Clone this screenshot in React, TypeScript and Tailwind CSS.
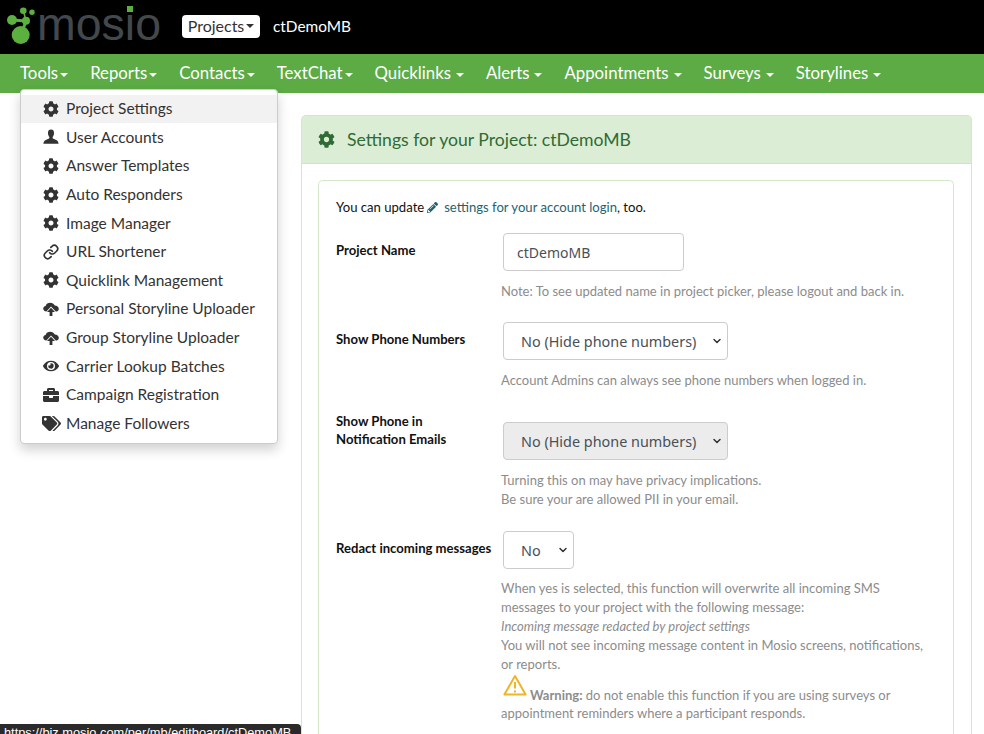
import { ChevronDown, Link } from "lucide-react";
import { FaBriefcase, FaCog, FaEye, FaPencilAlt, FaTags } from "react-icons/fa";

function Caret() {
  return <span className="inline-block ml-[2px] w-0 h-0 border-x-[4px] border-x-transparent border-t-[4px] border-t-current align-middle" />;
}

function CloudUp({ className }: { className?: string }) {
  return (
    <svg viewBox="0 0 16 16" className={className} fill="currentColor">
      <path d="M3.4 10.6 C1.4 10.4 0.2 9.2 0.2 7.6 C0.2 6.2 1.2 5.1 2.6 4.9 C3.2 3 5 1.8 7.2 1.8 C9.3 1.8 11 2.9 11.8 4.6 C14 4.6 15.8 6 15.8 7.9 C15.8 9.4 14.6 10.4 12.8 10.6 L8 5.6 Z" />
      <path d="M8 6.8 L12 11 H9.4 V15 H6.6 V11 H4 Z" />
    </svg>
  );
}

function UserBust({ className }: { className?: string }) {
  return (
    <svg viewBox="0 0 16 16" className={className} fill="currentColor">
      <path d="M8 0.5 C10.2 0.5 11.2 2.2 11 4.4 C10.9 6 10.2 7.2 9.6 8 C9.4 9 10 9.6 11 10 C13 10.8 15.4 11.6 15.6 14.8 H0.4 C0.6 11.6 3 10.8 5 10 C6 9.6 6.6 9 6.4 8 C5.8 7.2 5.1 6 5 4.4 C4.8 2.2 5.8 0.5 8 0.5 Z" />
    </svg>
  );
}

function Logo() {
  return (
    <svg viewBox="0 0 165 54" className="w-[165px] h-[54px] shrink-0">
      <g fill="#5cb03f" stroke="#5cb03f">
        <line x1="21" y1="35" x2="26" y2="21" strokeWidth="3" />
        <line x1="12" y1="20" x2="26" y2="21" strokeWidth="3" />
        <line x1="26" y1="21" x2="23.5" y2="11" strokeWidth="1.5" />
        <circle cx="20.7" cy="35" r="9" strokeWidth="0" />
        <circle cx="26" cy="20.7" r="4" strokeWidth="0" />
        <circle cx="12" cy="20" r="5" strokeWidth="0" />
        <circle cx="23.3" cy="10.7" r="3.3" strokeWidth="0" />
        <circle cx="32" cy="12.3" r="2.7" strokeWidth="0" />
      </g>
      <text x="37" y="40" fontSize="46.5" fill="#43484d" fontFamily="'Liberation Sans', sans-serif">mosio</text>
      <rect x="127" y="6" width="6" height="6" fill="#5cb03f" />
    </svg>
  );
}

const navItems = [
  { label: "Tools", spaced: false },
  { label: "Reports", spaced: false },
  { label: "Contacts", spaced: false },
  { label: "TextChat", spaced: false },
  { label: "Quicklinks", spaced: true },
  { label: "Alerts", spaced: true },
  { label: "Appointments", spaced: true },
  { label: "Surveys", spaced: true },
  { label: "Storylines", spaced: true },
];

const iconClass = "w-4 h-4 text-[#333]";

const menuItems = [
  { label: "Project Settings", icon: <FaCog className={iconClass} />, active: true },
  { label: "User Accounts", icon: <UserBust className={iconClass} /> },
  { label: "Answer Templates", icon: <FaCog className={iconClass} /> },
  { label: "Auto Responders", icon: <FaCog className={iconClass} /> },
  { label: "Image Manager", icon: <FaCog className={iconClass} /> },
  { label: "URL Shortener", icon: <Link className={iconClass} strokeWidth={2.5} /> },
  { label: "Quicklink Management", icon: <FaCog className={iconClass} /> },
  { label: "Personal Storyline Uploader", icon: <CloudUp className={iconClass} /> },
  { label: "Group Storyline Uploader", icon: <CloudUp className={iconClass} /> },
  { label: "Carrier Lookup Batches", icon: <FaEye className={iconClass} /> },
  { label: "Campaign Registration", icon: <FaBriefcase className={iconClass} /> },
  { label: "Manage Followers", icon: <FaTags className="w-[19px] h-[19px] shrink-0 text-[#333]" /> },
];

function SelectBox({ value, width, disabled }: { value: string; width: string; disabled?: boolean }) {
  return (
    <div className={`relative h-[38px] ${width}`}>
      <select
        defaultValue={value}
        className={`w-full h-full appearance-none rounded border border-[#ccc] pl-[17px] pt-[1px] text-[14.4px] text-[#495057] font-['Noto_Sans',sans-serif] ${disabled ? "bg-[#ececec]" : "bg-white"}`}
      >
        <option>{value}</option>
      </select>
      <ChevronDown className="absolute right-[5px] top-[13px] w-3 h-3 text-[#333] pointer-events-none" strokeWidth={3} />
    </div>
  );
}

function Help({ children }: { children: React.ReactNode }) {
  return <div className="-ml-[2px] text-[13px] leading-[19px] text-[#8c8c8c]">{children}</div>;
}

export default function App() {
  return (
    <div className="relative h-[734px] w-[984px] overflow-hidden bg-white font-[Lato,sans-serif] text-[#212529]">
      <header className="h-[54px] bg-black flex items-center">
        <Logo />
        <button className="ml-[17px] -mt-[2px] h-[23px] w-[78px] rounded bg-white text-[16px] text-[#333] flex items-center justify-center">
          Projects
          <Caret />
        </button>
        <span className="ml-[13px] -mt-[1px] text-[15.4px] text-white">ctDemoMB</span>
      </header>

      <nav className="h-[39px] bg-[#5cab45] pl-5 pb-[1px] flex items-center gap-[22px] text-[16.8px] text-white">
        {navItems.map((item) => (
          <a key={item.label} href="#" className="flex items-center">
            {item.label}
            <span className={item.spaced ? "ml-[3px]" : ""}>
              <Caret />
            </span>
          </a>
        ))}
      </nav>

      <main className="flex pt-[22px] pl-[301px] pr-[12px]">
        <section className="flex-1 rounded-t-[5px] border border-b-0 border-[#d3e8cb]">
          <div className="h-[48px] bg-[#dbeed5] border-b border-[#cfe5c7] pl-4 flex items-center gap-[12px] text-[17.6px] text-[#2f6b34]">
            <FaCog className="w-[17px] h-[17px]" />
            <span className="pt-[1px]">Settings for your Project: ctDemoMB</span>
          </div>
          <div className="mt-[16px] ml-4 mr-[17px] rounded-t-[5px] border border-b-0 border-[#d3e8cb] pt-[17px] pl-[17px] pr-4 h-[600px] text-[13.1px]">
            <p className="leading-[19px] text-[#111] flex items-center">
              You can update
              <FaPencilAlt className="w-[11px] h-[11px] mr-[6px] ml-[3px] text-[#1d6471]" />
              <a href="#" className="text-[#1d6471]">settings for your account login</a>, too.
            </p>

            <div className="flex mt-[16px]">
              <label className="w-[167px] shrink-0 pt-2 font-bold text-[#111] leading-[18px]">Project Name</label>
              <div>
                <input
                  defaultValue="ctDemoMB"
                  className="h-[38px] w-[181px] rounded border border-[#ccc] px-[13px] text-[14px] text-[#495057] font-['Noto_Sans',sans-serif]"
                />
                <div className="mt-[11px]"><Help>Note: To see updated name in project picker, please logout and back in.</Help></div>
              </div>
            </div>

            <div className="flex mt-[21px]">
              <label className="w-[167px] shrink-0 pt-2 font-bold text-[#111] leading-[18px]">Show Phone Numbers</label>
              <div>
                <SelectBox value="No (Hide phone numbers)" width="w-[225px]" />
                <div className="mt-[11px]"><Help>Account Admins can always see phone numbers when logged in.</Help></div>
              </div>
            </div>

            <div className="flex mt-[22px]">
              <label className="w-[167px] shrink-0 font-bold text-[#111] leading-[18px]">Show Phone in<br />Notification Emails</label>
              <div className="pt-[10px]">
                <SelectBox value="No (Hide phone numbers)" width="w-[225px]" disabled />
                <div className="mt-[11px]">
                  <Help>Turning this on may have privacy implications.<br />Be sure your are allowed PII in your email.</Help>
                </div>
              </div>
            </div>

            <div className="flex mt-[22px]">
              <label className="w-[167px] shrink-0 pt-2 font-bold text-[#111] leading-[18px] whitespace-nowrap">Redact incoming messages</label>
              <div>
                <SelectBox value="No" width="w-[71px]" />
                <div className="mt-[10px] w-[428px]">
                  <Help>
                    When yes is selected, this function will overwrite all incoming SMS messages to your project with the following message:<br />
                    <em>Incoming message redacted by project settings</em><br />
                    You will not see incoming message content in Mosio screens, notifications, or reports.
                  </Help>
                  <div className="-ml-[2px] text-[13px] leading-[18px] text-[#8c8c8c]">
                    <svg viewBox="0 0 24 22" className="inline-block w-[24px] h-[22px] ml-[2px] mr-[3px] align-[4px]" fill="none">
                      <path d="M12 2 L22.6 20.5 H1.4 Z" stroke="#f0b429" strokeWidth="2" strokeLinejoin="round" />
                      <path d="M12 8 V14.5 M12 16.5 V18.5" stroke="#f0b429" strokeWidth="2" />
                    </svg>
                    <strong>Warning:</strong> do not enable this function if you are using surveys or appointment reminders where a participant responds.
                  </div>
                </div>
              </div>
            </div>
          </div>
        </section>
      </main>

      {/* tools menu, open over the page */}
      <div className="absolute left-[20px] top-[89px] w-[258px] h-[355px] rounded bg-white border border-[#ccc] shadow-[0_6px_12px_rgba(0,0,0,0.18)] pt-[4.5px] text-[15.5px] text-[#333]">
        {menuItems.map((item) => (
          <a
            key={item.label}
            href="#"
            className={`h-[28.6px] pl-[22px] flex items-center gap-[7px] whitespace-nowrap ${item.active ? "bg-[#f2f2f2]" : ""}`}
          >
            <span className="w-4 flex justify-center">{item.icon}</span>
            {item.label}
          </a>
        ))}
      </div>

      {/* browser status bubble */}
      <div className="absolute left-0 bottom-0 h-[10px] w-[301px] rounded-tr bg-[#2a2a2a] overflow-hidden pl-[4px] pt-[1px] text-[12.8px] leading-[16px] text-white font-['Liberation_Sans',sans-serif]">
        https://biz.mosio.com/per/mb/editboard/ctDemoMB
      </div>
    </div>
  );
}
